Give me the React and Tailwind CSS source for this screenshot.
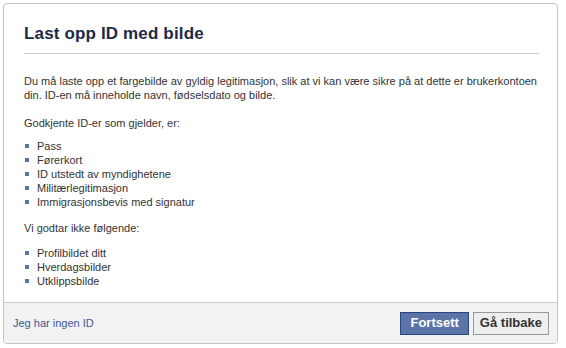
import React from 'react';

const accepted = ['Pass', 'Førerkort', 'ID utstedt av myndighetene', 'Militærlegitimasjon', 'Immigrasjonsbevis med signatur'];
const rejected = ['Profilbildet ditt', 'Hverdagsbilder', 'Utklippsbilde'];

const BulletList = ({ items, className }) => (
  <ul className={className}>
    {items.map((item) => (
      <li key={item} className="flex items-center leading-[14px]">
        <span className="ml-[1px] mr-[8px] w-[4px] h-[4px] bg-[#5b74a8] shrink-0" />
        <span>{item}</span>
      </li>
    ))}
  </ul>
);

export default function App() {
  return (
    <div className="w-[566px] h-[348px] bg-white pt-[3px] pl-[3px]" style={{ fontFamily: '"Liberation Sans", Arial, sans-serif' }}>
      <div className="w-[555px] h-[341px] border border-[#c4c4c4] rounded-[4px] flex flex-col overflow-hidden">
        <div className="flex-1 pl-5 pr-[18px]">
          <h2 className="pt-[20px] pb-[9px] text-[17px] leading-[20px] font-bold tracking-[0.15px] text-[#1c2a47] border-b border-[#cccccc]">
            Last opp ID med bilde
          </h2>
          <div className="pt-[20px] text-[11px] text-[#333333]">
            <p className="leading-[14px]">
              Du må laste opp et fargebilde av gyldig legitimasjon, slik at vi kan være sikre på at dette er brukerkontoen din. ID-en må inneholde navn, fødselsdato og bilde.
            </p>
            <p className="mt-[14px] leading-[14px]">Godkjente ID-er som gjelder, er:</p>
            <BulletList items={accepted} className="mt-[9px] mb-[12px]" />
            <p className="leading-[14px]">Vi godtar ikke følgende:</p>
            <BulletList items={rejected} className="mt-[11px]" />
          </div>
        </div>
        <div className="h-[41px] bg-[#f2f2f2] border-t border-[#cccccc] flex items-center justify-between pl-[9px] pr-[8px]">
          <a className="text-[11px] text-[#3b5998]">Jeg har ingen ID</a>
          <div className="flex gap-[4px]">
            <button className="h-[23px] px-[9px] bg-[#5b74a8] border border-[#29447e] text-white text-[13px] font-bold">
              Fortsett
            </button>
            <button className="h-[23px] px-[6px] bg-[#eeeeee] border border-[#999999] text-[#333333] text-[13px] font-bold">
              Gå tilbake
            </button>
          </div>
        </div>
      </div>
    </div>
  );
}
